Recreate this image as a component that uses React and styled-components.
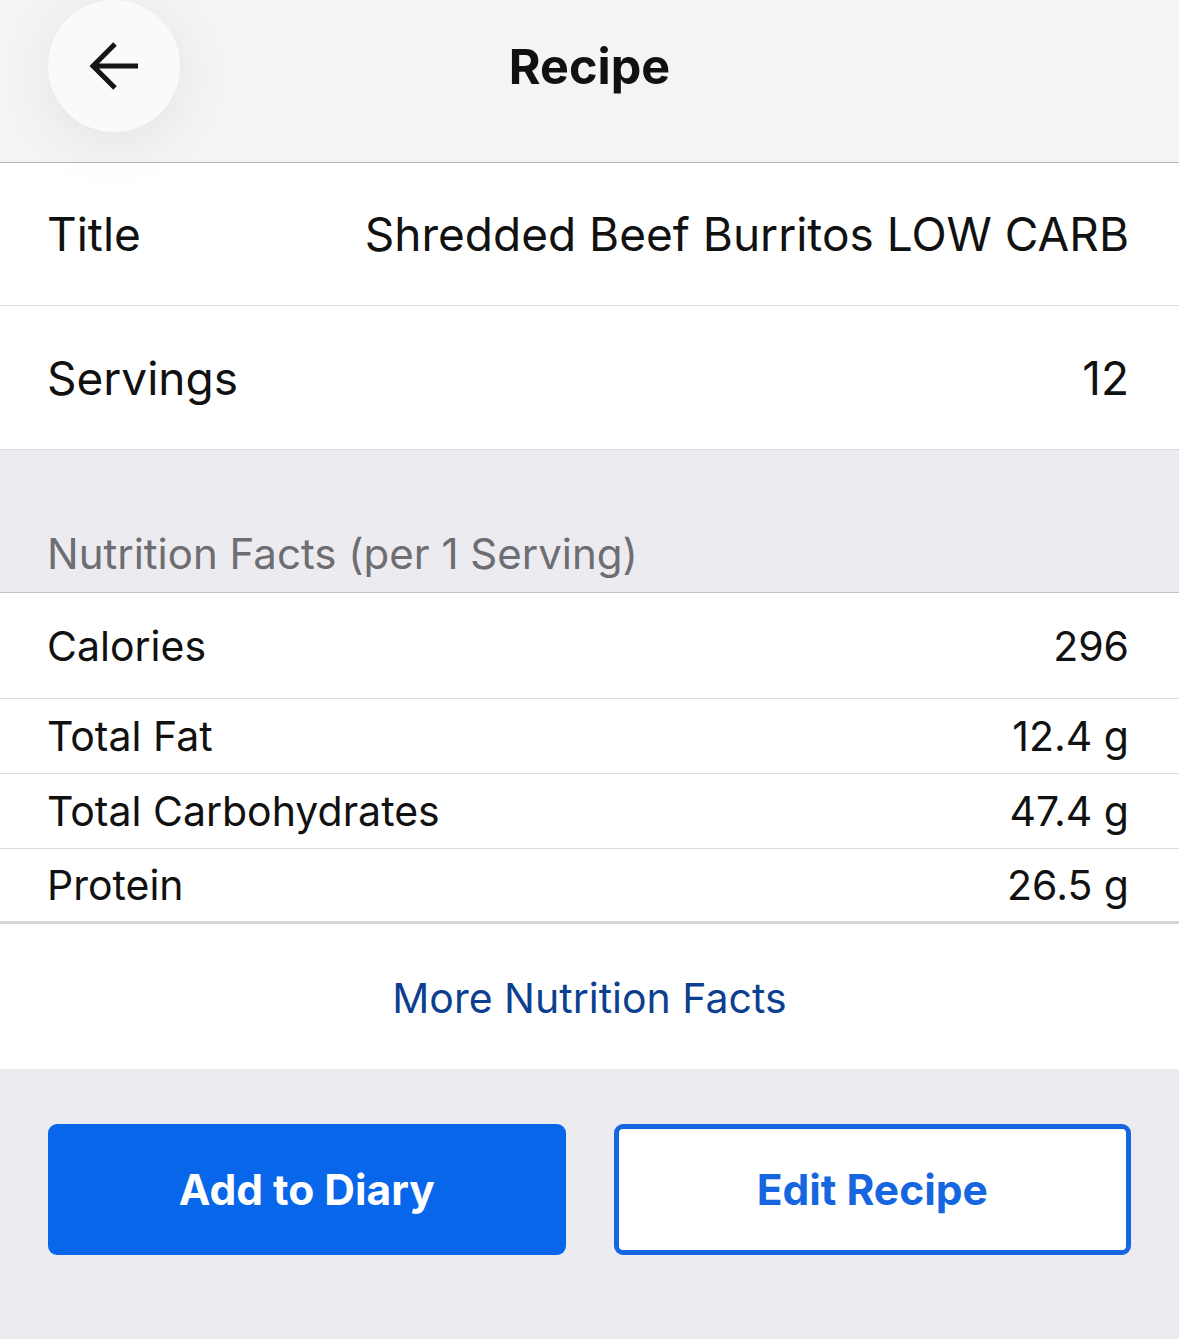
import React from "react";
import styled, { createGlobalStyle } from "styled-components";

const Global = createGlobalStyle`
  html, body { margin: 0; padding: 0; background: #ebebf0; }
  body { font-family: Inter, "Noto Sans", "Liberation Sans", sans-serif; -webkit-font-smoothing: antialiased; }
  * { box-sizing: border-box; }
`;

const Page = styled.div`
  width: 1179px;
  height: 1339px;
  background: #ebebf0;
  display: flex;
  flex-direction: column;
  overflow: hidden;
`;

const Header = styled.header`
  height: 163px;
  background: #f4f4f6;
  border-bottom: 1px solid #b4b4b8;
  display: grid;
  grid-template-columns: 1fr auto 1fr;
  align-items: start;
  position: relative;
  z-index: 1;
`;

const BackButton = styled.button`
  margin-left: 48px;
  width: 132px;
  height: 132px;
  border-radius: 50%;
  border: none;
  background: #fafafc;
  box-shadow: 0 10px 60px rgba(0, 0, 0, 0.07);
  display: flex;
  align-items: center;
  justify-content: center;
  padding: 0;
  justify-self: start;
`;

const HeaderTitle = styled.h1`
  margin: 0;
  font-size: 48.5px;
  font-weight: 700;
  color: #111;
  line-height: 134px;
`;

const Row = styled.div`
  background: #fff;
  height: ${(p) => p.$h}px;
  display: flex;
  align-items: center;
  justify-content: space-between;
  padding: 0 50px 0 47px;
  border-bottom: ${(p) => p.$bw || 1}px solid ${(p) => p.$bc || "#dcdce0"};
`;

const Label = styled.span`
  font-size: ${(p) => p.$size}px;
  color: #111;
`;

const Value = styled.span`
  font-size: ${(p) => p.$size}px;
  color: #111;
`;

const SectionHead = styled.div`
  height: 143px;
  display: flex;
  align-items: flex-end;
  padding: 0 50px 13px 47px;
  border-bottom: 1px solid #c4c4c8;
  font-size: 42px;
  color: #6d6d72;
`;

const MoreLink = styled.a`
  height: 145px;
  background: #fff;
  display: flex;
  align-items: center;
  justify-content: center;
  font-size: 41px;
  color: #0c3f8f;
  text-decoration: none;
  padding-top: 2px;
`;

const Actions = styled.div`
  display: grid;
  grid-template-columns: 1fr 1fr;
  gap: 48px;
  padding: 55px 48px 0;
`;

const ActionButton = styled.button`
  height: 131px;
  border-radius: 9px;
  font-family: inherit;
  font-size: 42.5px;
  font-weight: 700;
  background: ${(p) => (p.$primary ? "#0866eb" : "#fff")};
  color: ${(p) => (p.$primary ? "#fff" : "#1666e0")};
  border: ${(p) => (p.$primary ? "none" : "5px solid #1666e0")};
`;

const Arrow = () => (
  <svg width="52" height="52" viewBox="0 0 52 52" fill="none">
    <path d="M4 26 H50 M27 4 L5 26 L27 48" stroke="#151515" strokeWidth="5" strokeLinecap="butt" strokeLinejoin="miter" />
  </svg>
);

const nutrients = [
  ["Calories", "296", 106],
  ["Total Fat", "12.4 g", 75],
  ["Total Carbohydrates", "47.4 g", 75],
  ["Protein", "26.5 g", 75],
];

export default function App() {
  return (
    <Page>
      <Global />
      <Header>
        <BackButton aria-label="Back"><Arrow /></BackButton>
        <HeaderTitle>Recipe</HeaderTitle>
        <div />
      </Header>
      <Row $h={143}>
        <Label $size={46}>Title</Label>
        <Value $size={46}>Shredded Beef Burritos LOW CARB</Value>
      </Row>
      <Row $h={144} $bw={0}>
        <Label $size={46}>Servings</Label>
        <Value $size={46}>12</Value>
      </Row>
      <SectionHead>Nutrition Facts (per 1 Serving)</SectionHead>
      {nutrients.map(([l, v, h], i) => (
        <Row key={l} $h={h} $bw={i === nutrients.length - 1 ? 3 : 1} $bc={i === nutrients.length - 1 ? "#d6d6d8" : "#dcdce0"}>
          <Label $size={41}>{l}</Label>
          <Value $size={41}>{v}</Value>
        </Row>
      ))}
      <MoreLink href="#">More Nutrition Facts</MoreLink>
      <Actions>
        <ActionButton $primary>Add to Diary</ActionButton>
        <ActionButton>Edit Recipe</ActionButton>
      </Actions>
    </Page>
  );
}
